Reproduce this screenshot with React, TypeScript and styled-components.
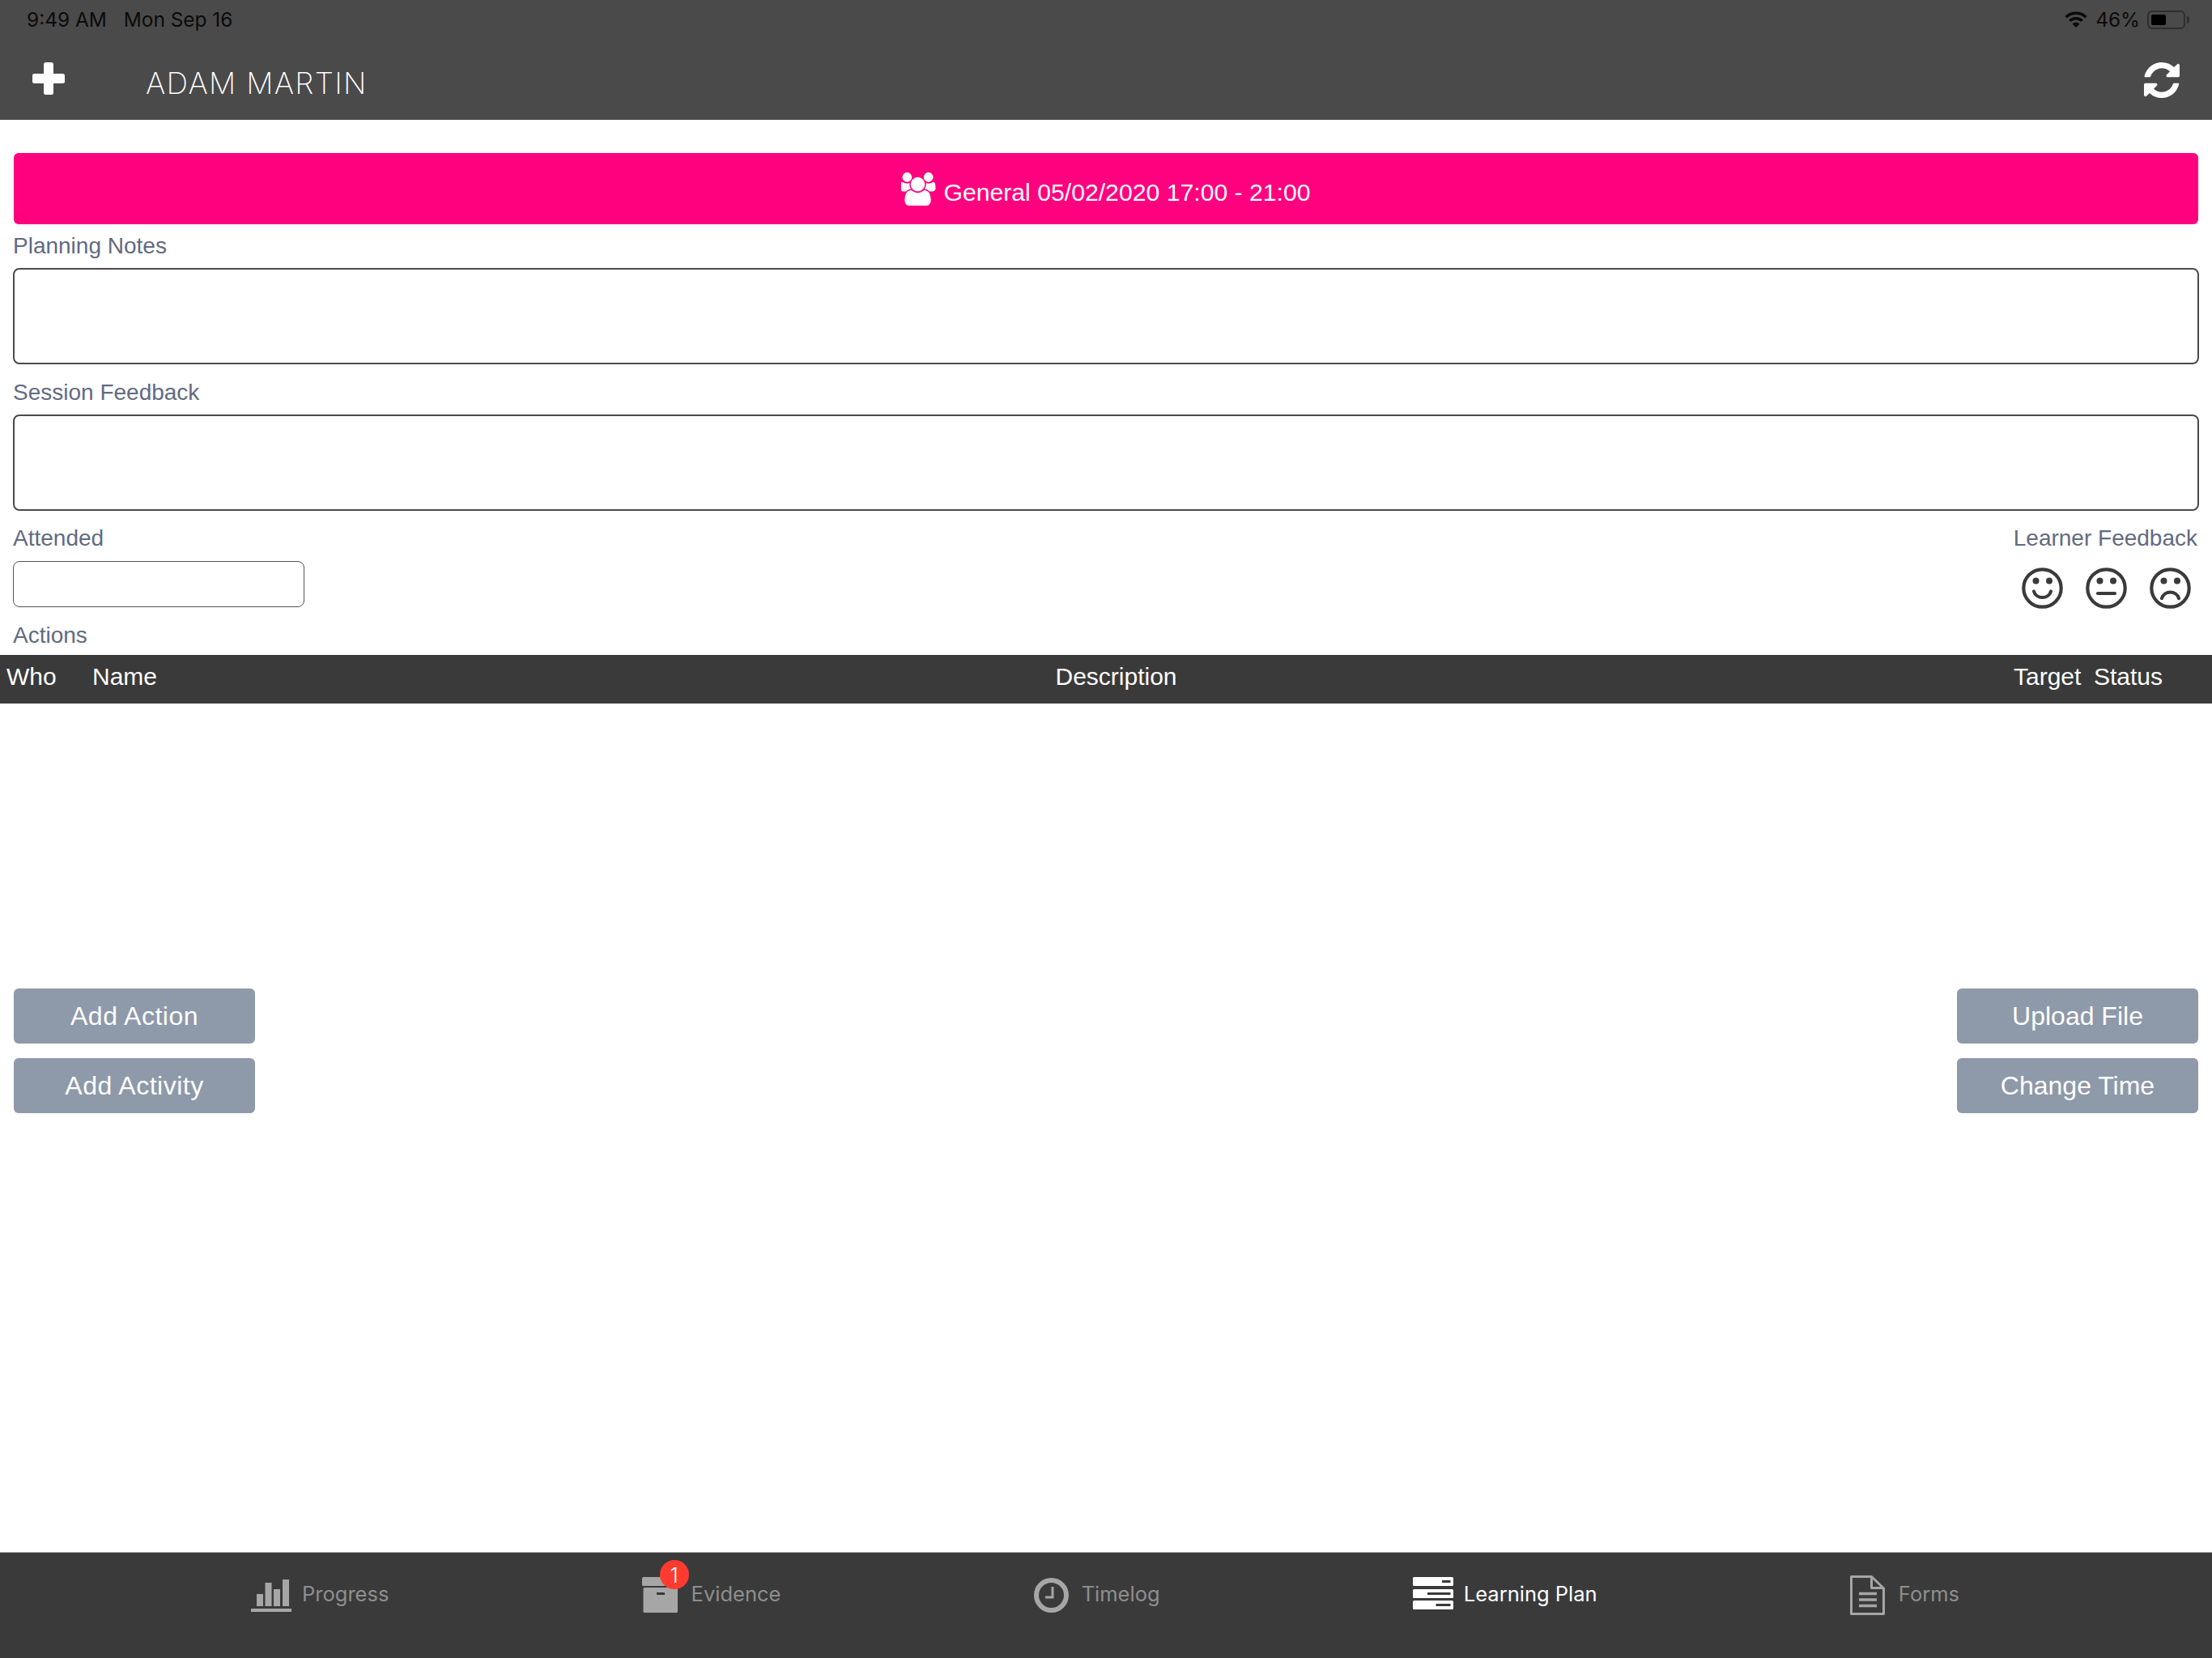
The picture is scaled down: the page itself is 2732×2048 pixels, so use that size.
import React from "react";
import styled, { createGlobalStyle } from "styled-components";

const tabs = [
  { label: "Progress", icon: "progress", gap: 13 },
  { label: "Evidence", icon: "evidence", gap: 16, badge: 1 },
  { label: "Timelog", icon: "timelog", gap: 16 },
  { label: "Learning Plan", icon: "plan", gap: 13, active: true },
  { label: "Forms", icon: "forms", gap: 17 },
];

const PlusIcon = () => (
  <svg width="40" height="40" viewBox="0 0 40 40" fill="#fff">
    <rect x="14" y="0" width="12" height="40" rx="2.5" />
    <rect x="0" y="14" width="40" height="12" rx="2.5" />
  </svg>
);

const RefreshIcon = () => (
  <svg width="44" height="44" viewBox="128 128 1536 1536" fill="#fff">
    <path d="M1639 1056q0 5-1 7-64 268-268 434.5t-478 166.5q-146 0-282.5-55t-243.5-157l-129 129q-19 19-45 19t-45-19-19-45v-448q0-26 19-45t45-19h448q26 0 45 19t19 45-19 45l-137 137q71 66 161 102t187 36q134 0 250-65t186-179q11-17 53-117 8-23 30-23h192q13 0 22.5 9.5t9.5 22.5zm25-800v448q0 26-19 45t-45 19h-448q-26 0-45-19t-19-45 19-45l138-138q-148-137-349-137-134 0-250 65t-186 179q-11 17-53 117-8 23-30 23h-199q-13 0-22.5-9.5t-9.5-22.5v-7q65-268 270-434.5t480-166.5q146 0 284 55.5t245 156.5l130-129q19-19 45-19t45 19 19 45z" />
  </svg>
);

const UsersIcon = () => (
  <svg width="44" height="41" viewBox="0 128 1920 1536" fill="#fff">
    <path d="M529 896q-162 5-265 128h-134q-82 0-138-40.5t-56-118.5q0-353 124-353 6 0 43.5 21t97.5 42.5 119 21.5q67 0 133-23-5 37-5 66 0 139 81 256zm1071 637q0 120-73 189.5t-194 69.5h-874q-121 0-194-69.5t-73-189.5q0-53 3.5-103.5t14-109 26.5-108.5 43-97.5 62-81 85.5-53.5 111.5-20q10 0 43 21.5t73 48 107 48 135 21.5 135-21.5 107-48 73-48 43-21.5q61 0 111.5 20t85.5 53.5 62 81 43 97.5 26.5 108.5 14 109 3.5 103.5zm-1024-1277q0 106-75 181t-181 75-181-75-75-181 75-181 181-75 181 75 75 181zm704 384q0 159-112.5 271.5t-271.5 112.5-271.5-112.5-112.5-271.5 112.5-271.5 271.5-112.5 271.5 112.5 112.5 271.5zm576 225q0 78-56 118.5t-138 40.5h-134q-103-123-265-128 81-117 81-256 0-29-5-66 66 23 133 23 59 0 119-21.5t97.5-42.5 43.5-21q124 0 124 353zm-128-609q0 106-75 181t-181 75-181-75-75-181 75-181 181-75 181 75 75 181z" />
  </svg>
);

const WifiIcon = () => (
  <svg width="28" height="20" viewBox="0 0 28 20" fill="none" stroke="#0a0a0a" strokeWidth="3.4">
    <path d="M1.6 7.2C8.6 0.6 19.4 0.6 26.4 7.2" />
    <path d="M6.4 11.8C10.8 7.8 17.2 7.8 21.6 11.8" />
    <path d="M14 20L9.6 15.4C12.2 13.2 15.8 13.2 18.4 15.4Z" fill="#0a0a0a" stroke="none" />
  </svg>
);

const Smiley = ({ mood }: { mood: "happy" | "neutral" | "sad" }) => (
  <svg width="51" height="51" viewBox="0 0 51 51" fill="none" stroke="#3a3a3a" strokeWidth="4.2" strokeLinecap="round">
    <circle cx="25.5" cy="25.5" r="23.2" />
    <circle cx="17.5" cy="16.5" r="4" fill="#3a3a3a" stroke="none" />
    <circle cx="34" cy="16.5" r="4" fill="#3a3a3a" stroke="none" />
    {mood === "happy" && <path d="M15 29.5C18 39.5 33 39.5 36 29.5" />}
    {mood === "neutral" && <path d="M15 32H36" />}
    {mood === "sad" && <path d="M15 38C18 28 33 28 36 38" />}
  </svg>
);

const TabIcon = ({ name, color }: { name: string; color: string }) => {
  if (name === "progress") {
    return (
      <svg width="50" height="42" viewBox="0 -2 50 42" fill={color}>
        <rect x="7" y="18" width="8" height="15" />
        <rect x="17.5" y="4" width="8" height="29" />
        <rect x="28" y="12" width="8" height="21" />
        <rect x="39" y="0" width="8" height="33" />
        <rect x="0" y="36" width="50" height="4" />
      </svg>
    );
  }
  if (name === "evidence") {
    return (
      <svg width="45" height="44" viewBox="0 0 45 44" fill={color}>
        <rect x="0" y="0" width="45" height="11" rx="1.5" />
        <path fillRule="evenodd" d="M3 13H44V42.5Q44 44 42.5 44H3Q1.5 44 1.5 42.5V14.5Q1.5 13 3 13ZM18 19V22H28V19Z" />
      </svg>
    );
  }
  if (name === "timelog") {
    return (
      <svg width="43" height="43" viewBox="0 0 43 43" fill="none" stroke={color}>
        <circle cx="21.5" cy="21.5" r="18.5" strokeWidth="6" />
        <path d="M23 11V24H14" strokeWidth="3" />
      </svg>
    );
  }
  if (name === "plan") {
    return (
      <svg width="50" height="44" viewBox="0 0 50 44" fill={color}>
        <path fillRule="evenodd" d="M1.5 0H48.5Q50 0 50 1.5V9.5Q50 11 48.5 11H1.5Q0 11 0 9.5V1.5Q0 0 1.5 0ZM36 4V7H46.5V4Z" />
        <path fillRule="evenodd" d="M1.5 15H48.5Q50 15 50 16.5V24.5Q50 26 48.5 26H1.5Q0 26 0 24.5V16.5Q0 15 1.5 15ZM18 19V22H46.5V19Z" />
        <path fillRule="evenodd" d="M1.5 29H48.5Q50 29 50 30.5V38.5Q50 40 48.5 40H1.5Q0 40 0 38.5V30.5Q0 29 1.5 29ZM28.5 33V36H46.5V33Z" />
      </svg>
    );
  }
  return (
    <svg width="43" height="49" viewBox="0 0 43 49" fill="none" stroke={color} strokeWidth="3">
      <path d="M1.5 1.5H26.5L41.5 16V47.5H1.5Z" strokeLinejoin="round" />
      <path d="M26.5 1.5V15.5H41.5" strokeLinejoin="round" />
      <path d="M11 22.5H33M11 30H33M11 37.5H33" strokeWidth="3.4" />
    </svg>
  );
};

const App = () => {
  return (
    <Page>
      <GlobalStyle />
      <Header>
        <StatusBar>
          <StatusGroup>
            <span>9:49 AM</span>
            <span>Mon Sep 16</span>
          </StatusGroup>
          <BatteryGroup>
            <WifiIcon />
            <Percent>46%</Percent>
            <Battery>
              <BatteryFill />
            </Battery>
          </BatteryGroup>
        </StatusBar>
        <NavRow>
          <PlusButton>
            <PlusIcon />
          </PlusButton>
          <Title>ADAM MARTIN</Title>
          <RefreshButton>
            <RefreshIcon />
          </RefreshButton>
        </NavRow>
      </Header>

      <Main>
        <Form>
          <Banner>
            <UsersIcon />
            <BannerText>General 05/02/2020 17:00 - 21:00</BannerText>
          </Banner>
          <NoteLabel>Planning Notes</NoteLabel>
          <NoteBox />
          <NoteLabel>Session Feedback</NoteLabel>
          <NoteBox />
          <FeedbackRow>
            <div>
              <FieldLabel>Attended</FieldLabel>
              <AttendedBox />
            </div>
            <LearnerFeedback>
              <FieldLabel>Learner Feedback</FieldLabel>
              <Smileys>
                <Smiley mood="happy" />
                <Smiley mood="neutral" />
                <Smiley mood="sad" />
              </Smileys>
            </LearnerFeedback>
          </FeedbackRow>
          <ActionsLabel>Actions</ActionsLabel>
        </Form>

        <TableHead>
          <span>Who</span>
          <span>Name</span>
          <Description>Description</Description>
          <span>Target</span>
          <span>Status</span>
        </TableHead>

        <ButtonRow>
          <ButtonStack>
            <ActionButton $wide>Add Action</ActionButton>
            <ActionButton $wide>Add Activity</ActionButton>
          </ButtonStack>
          <ButtonStack>
            <ActionButton>Upload File</ActionButton>
            <ActionButton>Change Time</ActionButton>
          </ButtonStack>
        </ButtonRow>
      </Main>

      <TabBar>
        {tabs.map((tab) => (
          <Tab key={tab.label} $active={!!tab.active} $gap={tab.gap}>
            <TabIconWrap>
              <TabIcon name={tab.icon} color={tab.active ? "#ffffff" : "#a6a6a6"} />
              {tab.badge && <Badge>{tab.badge}</Badge>}
            </TabIconWrap>
            <TabLabel>{tab.label}</TabLabel>
          </Tab>
        ))}
      </TabBar>
    </Page>
  );
};

export default App;

const GlobalStyle = createGlobalStyle`
  html, body {
    margin: 0;
    padding: 0;
    background: #fff;
  }
  * {
    box-sizing: border-box;
  }
`;

const Page = styled.div`
  width: 2732px;
  height: 2048px;
  display: flex;
  flex-direction: column;
  font-family: "Liberation Sans", Arial, sans-serif;
  background: #fff;
  overflow: hidden;
`;

const Header = styled.header`
  height: 148px;
  flex: none;
  background: #4a4a4a;
`;

const StatusBar = styled.div`
  height: 48px;
  display: flex;
  align-items: center;
  justify-content: space-between;
  padding: 0 33px 0 33px;
  font-family: Inter, sans-serif;
  font-size: 24.4px;
  color: #0a0a0a;
`;

const StatusGroup = styled.div`
  display: flex;
  gap: 21px;
`;

const BatteryGroup = styled.div`
  display: flex;
  align-items: center;
`;

const Percent = styled.span`
  margin: 0 9px 0 10px;
`;

const Battery = styled.div`
  position: relative;
  width: 47px;
  height: 23px;
  padding: 3px;
  border: 2px solid #2e2e2e;
  border-radius: 6px;

  &::after {
    content: "";
    position: absolute;
    right: -7px;
    top: 5px;
    width: 3px;
    height: 9px;
    border-radius: 0 3px 3px 0;
    background: #2e2e2e;
  }
`;

const BatteryFill = styled.div`
  width: 18px;
  height: 100%;
  border-radius: 2px;
  background: #000;
`;

const NavRow = styled.div`
  height: 100px;
  display: flex;
  align-items: flex-start;
  padding: 29px 40px 0;
`;

const PlusButton = styled.div`
  width: 140px;
  height: 40px;
`;

const Title = styled.div`
  flex: 1;
  margin-top: 2px;
  font-family: Inter, sans-serif;
  font-size: 37px;
  line-height: 48px;
  font-weight: 200;
  letter-spacing: 1.3px;
  color: #fff;
`;

const RefreshButton = styled.div`
  height: 44px;
`;

const Main = styled.main`
  flex: 1;
`;

const Form = styled.div`
  padding: 41px 16px 0;
`;

const Banner = styled.div`
  height: 88px;
  margin: 0 1px 9px;
  display: flex;
  align-items: center;
  justify-content: center;
  gap: 8px;
  border-radius: 6px;
  background: #ff007f;
  color: #fff;
  font-size: 30.2px;
`;

const BannerText = styled.span`
  padding-top: 9px;
`;

const FieldLabel = styled.div`
  height: 34px;
  line-height: 34px;
  margin-bottom: 11px;
  font-size: 28px;
  color: #626a82;
`;

const NoteLabel = styled(FieldLabel)`
  line-height: 36px;
`;

const NoteBox = styled.div`
  height: 119px;
  margin-bottom: 17px;
  border: 2px solid #4a4a4a;
  border-radius: 8px;
  background: #fff;
`;

const FeedbackRow = styled.div`
  height: 102px;
  display: flex;
  justify-content: space-between;
`;

const AttendedBox = styled.div`
  width: 360px;
  height: 57px;
  border: 1.5px solid #555;
  border-radius: 8px;
`;

const LearnerFeedback = styled.div`
  display: flex;
  flex-direction: column;
  align-items: flex-end;
  padding-right: 2px;
`;

const Smileys = styled.div`
  display: flex;
  gap: 28px;
  margin: 8px 8px 0 0;
`;

const ActionsLabel = styled(FieldLabel)`
  margin: 18px 0 7px;
`;

const TableHead = styled.div`
  height: 60px;
  display: grid;
  grid-template-columns: 106px 156px 1fr 99px 146px;
  align-items: center;
  padding: 0 0 6px 8px;
  background: #3a3a3a;
  color: #fff;
  font-size: 30px;
`;

const Description = styled.span`
  text-align: center;
`;

const ButtonRow = styled.div`
  display: flex;
  justify-content: space-between;
  margin-top: 352px;
  padding: 0 17px;
`;

const ButtonStack = styled.div`
  display: flex;
  flex-direction: column;
  gap: 18px;
`;

const ActionButton = styled.div<{ $wide?: boolean }>`
  width: 298px;
  height: 68px;
  display: flex;
  align-items: center;
  justify-content: center;
  border-radius: 6px;
  background: #8e99a9;
  color: #fff;
  font-size: 32px;
  letter-spacing: ${(p) => (p.$wide ? "0.5px" : "0")};
`;

const TabBar = styled.nav`
  height: 131px;
  flex: none;
  display: flex;
  justify-content: space-between;
  align-items: flex-start;
  padding: 26px 312px 0 310px;
  border-top: 1px solid #a9a9a9;
  background: #3a3a3a;
`;

const Tab = styled.div<{ $active: boolean; $gap: number }>`
  height: 52px;
  display: flex;
  align-items: center;
  gap: ${(p) => p.$gap}px;
  font-family: Inter, sans-serif;
  font-size: 25.5px;
  color: ${(p) => (p.$active ? "#ffffff" : "#8e8e8e")};
`;

const TabLabel = styled.span`
  padding-bottom: 3px;
`;

const TabIconWrap = styled.div`
  position: relative;
  display: flex;
`;

const Badge = styled.div`
  position: absolute;
  top: -21px;
  right: -13px;
  width: 36px;
  height: 36px;
  display: flex;
  align-items: center;
  justify-content: center;
  border-radius: 50%;
  background: #ff3b30;
  color: #fff;
  font-size: 26px;
  font-weight: 300;
`;
